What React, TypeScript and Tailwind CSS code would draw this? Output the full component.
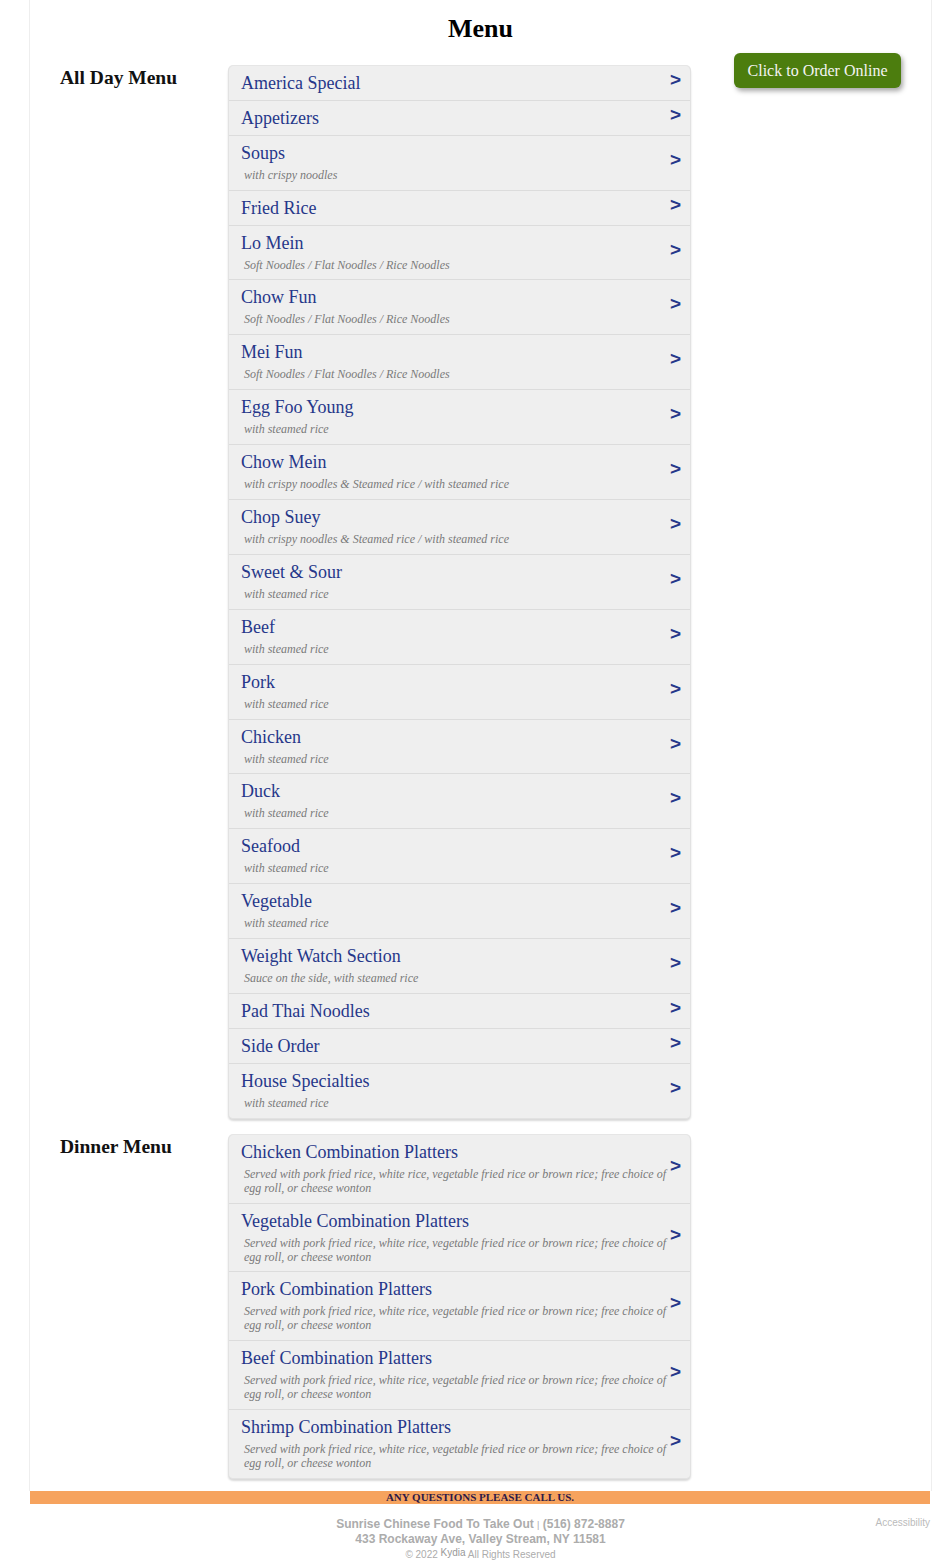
import React from 'react';

interface MenuItem {
  name: string;
  note?: string;
}

const SR = "font-['Liberation_Serif',serif]";

const allDay: MenuItem[] = [
  { name: 'America Special' },
  { name: 'Appetizers' },
  { name: 'Soups', note: 'with crispy noodles' },
  { name: 'Fried Rice' },
  { name: 'Lo Mein', note: 'Soft Noodles / Flat Noodles / Rice Noodles' },
  { name: 'Chow Fun', note: 'Soft Noodles / Flat Noodles / Rice Noodles' },
  { name: 'Mei Fun', note: 'Soft Noodles / Flat Noodles / Rice Noodles' },
  { name: 'Egg Foo Young', note: 'with steamed rice' },
  { name: 'Chow Mein', note: 'with crispy noodles & Steamed rice / with steamed rice' },
  { name: 'Chop Suey', note: 'with crispy noodles & Steamed rice / with steamed rice' },
  { name: 'Sweet & Sour', note: 'with steamed rice' },
  { name: 'Beef', note: 'with steamed rice' },
  { name: 'Pork', note: 'with steamed rice' },
  { name: 'Chicken', note: 'with steamed rice' },
  { name: 'Duck', note: 'with steamed rice' },
  { name: 'Seafood', note: 'with steamed rice' },
  { name: 'Vegetable', note: 'with steamed rice' },
  { name: 'Weight Watch Section', note: 'Sauce on the side, with steamed rice' },
  { name: 'Pad Thai Noodles' },
  { name: 'Side Order' },
  { name: 'House Specialties', note: 'with steamed rice' },
];

const platterNote =
  'Served with pork fried rice, white rice, vegetable fried rice or brown rice; free choice of egg roll, or cheese wonton';

const dinner: MenuItem[] = [
  { name: 'Chicken Combination Platters', note: platterNote },
  { name: 'Vegetable Combination Platters', note: platterNote },
  { name: 'Pork Combination Platters', note: platterNote },
  { name: 'Beef Combination Platters', note: platterNote },
  { name: 'Shrimp Combination Platters', note: platterNote },
];

const MenuList: React.FC<{ items: MenuItem[] }> = ({ items }) => (
  <div className="rounded-[5px] border-x border-b border-[#e2e2e2] bg-[#efefef] shadow-[0_-1px_0_#e6e6e6,0_2px_2px_rgba(0,0,0,0.15)] overflow-hidden">
    {items.map((item, i) => (
      <div
        key={item.name}
        className={
          'flex items-center pl-3 pr-[9px] pt-[7px] pb-[6.9px] ' +
          (i < items.length - 1 ? 'border-b border-[#dcdcdc]' : '')
        }
      >
        <div className="flex-1 min-w-0">
          <div className={`${SR} text-[18px] leading-5 text-[#26378a]`}>{item.name}</div>
          {item.note && (
            <div className={`${SR} italic text-[12px] leading-[14px] text-[#7a7a7a] mt-[5px] pb-px pl-[3px] pr-[2px]`}>
              {item.note}
            </div>
          )}
        </div>
        <span className="font-['Liberation_Sans',sans-serif] font-bold text-[19px] leading-5 text-[#26378a] -mt-[6px]">
          &gt;
        </span>
      </div>
    ))}
  </div>
);

export default function App() {
  return (
    <div className="min-h-[1566px] bg-white">
      <div className="ml-[29px] w-[903px]">
        <div className="border-x border-[#eeeeee] px-[30px] pt-3 pb-3">
          <h1 className={`${SR} text-[26px] leading-[34px] font-bold text-center text-black`}>Menu</h1>

          <div className="grid grid-cols-[168px_463px_1fr] mt-5">
            <div className={`${SR} text-[19.5px] leading-6 font-bold text-[#111]`}>All Day Menu</div>
            <MenuList items={allDay} />
            <div className="flex justify-end items-start">
              <button className={`${SR} -mt-[13px] w-[167px] h-[35px] rounded-[6px] bg-[#4c7d0e] text-[16px] text-[#f4f4f4] shadow-[2px_3px_5px_rgba(0,0,0,0.35)]`}>
                Click to Order Online
              </button>
            </div>
          </div>

          <div className="grid grid-cols-[168px_463px_1fr] mt-4">
            <div className={`${SR} text-[19.5px] leading-6 font-bold text-[#111]`}>Dinner Menu</div>
            <MenuList items={dinner} />
            <div />
          </div>
        </div>

        <div className={`${SR} ml-px mr-[2px] h-[13px] bg-[#f6a35e] text-center text-[11px] leading-[13px] font-bold text-[#2e1a47]`}>
          ANY QUESTIONS PLEASE CALL US.
        </div>
      </div>

      <div className="relative ml-[29px] w-[903px] pt-[13px] text-center font-['Liberation_Sans',sans-serif] text-[#acacac]">
        <div className="absolute right-[2px] top-[12px] text-[10px] leading-[14px] text-[#bbbbbb]">Accessibility</div>
        <div className="text-[12px] leading-[14px] font-bold">
          Sunrise Chinese Food To Take Out <span className="font-normal text-[9px]">|</span> (516) 872-8887
        </div>
        <div className="text-[12px] leading-[14px] font-bold">433 Rockaway Ave, Valley Stream, NY 11581</div>
        <div className="text-[10px] leading-[14px] mt-[2px]">
          © 2022 <span className="relative -top-[2px] text-[#999]">Kydia</span> All Rights Reserved
        </div>
      </div>
    </div>
  );
}
